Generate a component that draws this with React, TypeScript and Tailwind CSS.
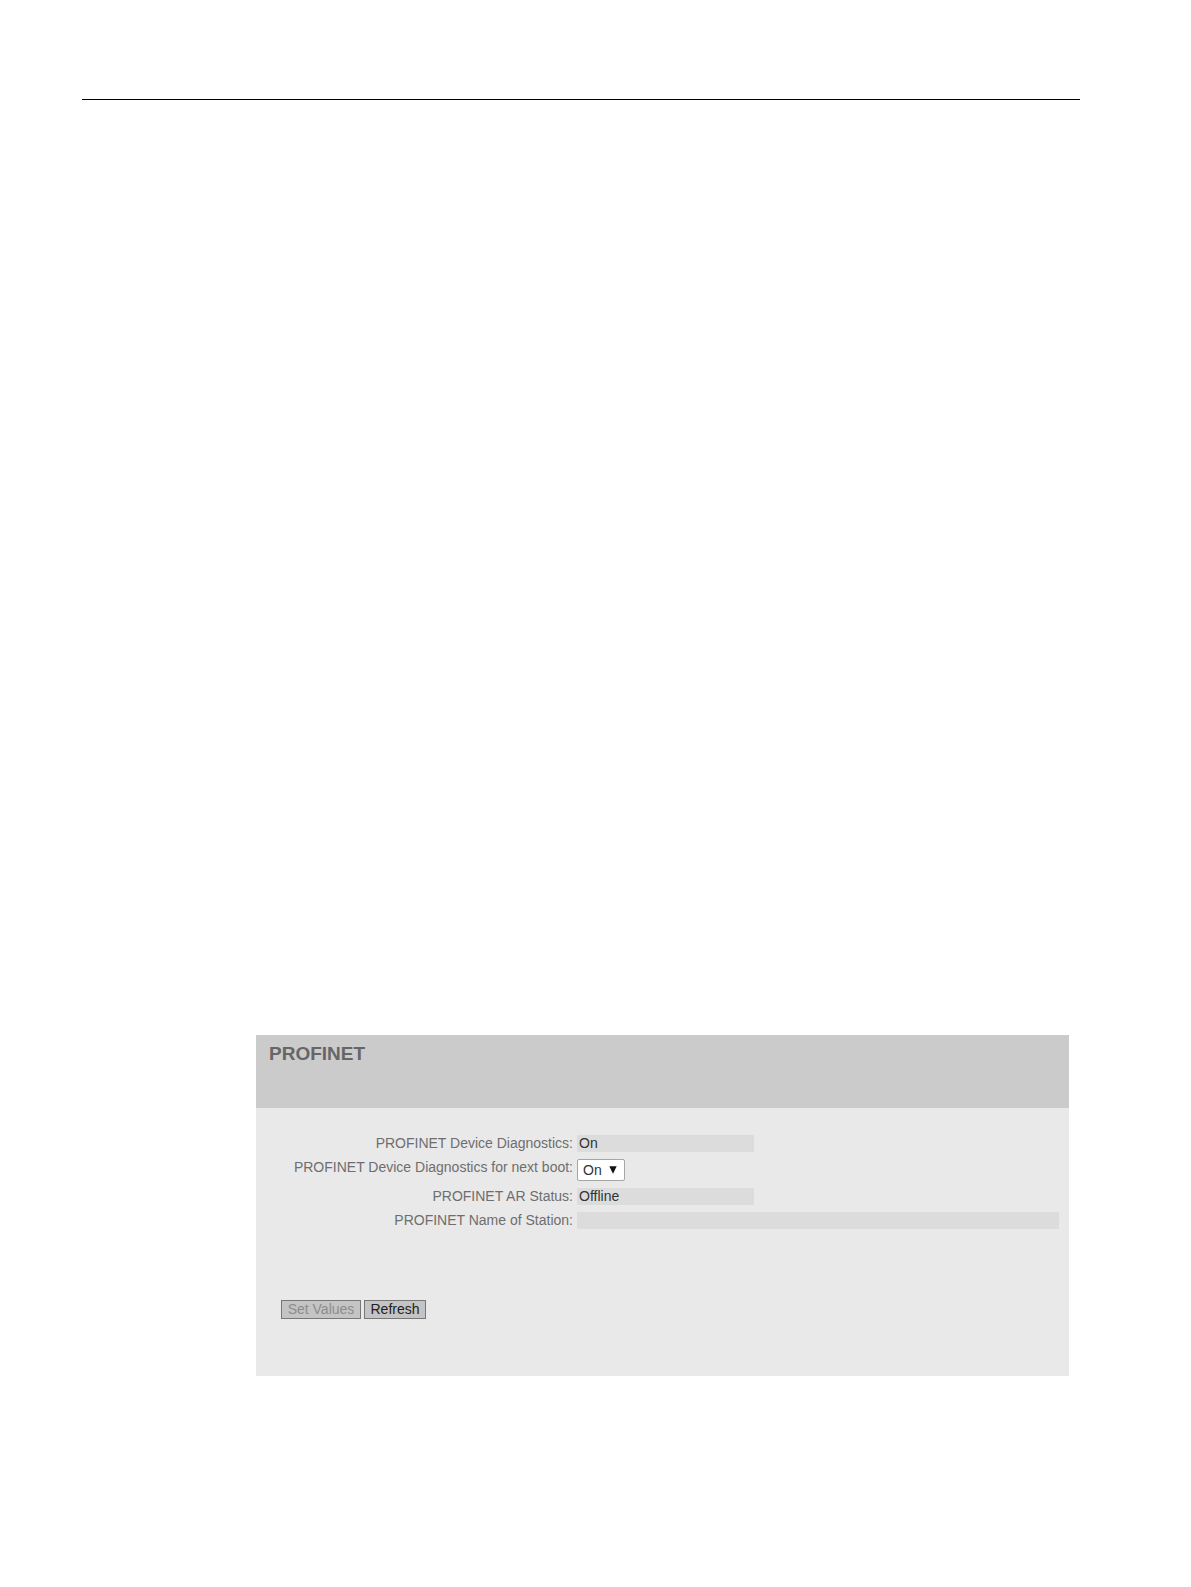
import { useState, type ReactNode } from "react";

interface RowProps {
  id: string;
  label: string;
  children: ReactNode;
}

function Row({ id, label, children }: RowProps) {
  return (
    <div className="grid grid-cols-[317px_1fr] items-start gap-1">
      <label htmlFor={id} className="text-right leading-[17px] text-[#6e6e6e]">
        {label}
      </label>
      {children}
    </div>
  );
}

interface ReadOnlyFieldProps {
  id: string;
  label: string;
  value: string;
  wide?: boolean;
}

function ReadOnlyField({ id, label, value, wide }: ReadOnlyFieldProps) {
  return (
    <Row id={id} label={label}>
      <input
        id={id}
        type="text"
        readOnly
        value={value}
        className={`h-[17px] bg-[#dcdcdc] px-0.5 leading-[17px] text-[#333333] outline-none ${
          wide ? "w-full" : "w-[177px]"
        }`}
      />
    </Row>
  );
}

export default function App() {
  const [nextBoot, setNextBoot] = useState("On");
  const changed = nextBoot !== "On";

  return (
    <div className="bg-white pb-[211px] pt-[99px] font-['Liberation_Sans',Arial,sans-serif] text-sm">
      <hr className="ml-[82px] mr-[111px] border-t border-black" />

      <main className="ml-64 mr-[122px] mt-[935px] bg-[#e9e9e9]">
        <header className="h-[73px] bg-[#cbcbcb] px-[13px] pt-2">
          <h1 className="text-[19px] font-bold leading-[22px] text-[#666666]">PROFINET</h1>
        </header>

        <form onSubmit={(e) => e.preventDefault()} className="pb-[57px] pt-[27px]">
          <div className="flex flex-col gap-[7px] pr-2.5">
            <ReadOnlyField id="diagnostics" label="PROFINET Device Diagnostics:" value="On" />
            <Row id="next-boot" label="PROFINET Device Diagnostics for next boot:">
              <div className="relative w-12">
                <select
                  id="next-boot"
                  value={nextBoot}
                  onChange={(e) => setNextBoot(e.target.value)}
                  className="block h-[22px] w-full appearance-none rounded-xs border border-[#a6a6a6] bg-white pl-[5px] text-[#333333]"
                >
                  <option>On</option>
                  <option>Off</option>
                </select>
                <svg
                  viewBox="0 0 8 8"
                  className="pointer-events-none absolute right-2 top-[7px] h-2 w-2"
                  aria-hidden="true"
                >
                  <path d="M0.3 0.3h7.4L4 7.8z" fill="#111111" />
                </svg>
              </div>
            </Row>
            <ReadOnlyField id="ar-status" label="PROFINET AR Status:" value="Offline" />
            <ReadOnlyField id="station-name" label="PROFINET Name of Station:" value="" wide />
          </div>

          <div className="mt-[71px] flex gap-[3px] pl-[25px]">
            <button
              type="submit"
              disabled={!changed}
              className="h-[19px] w-20 border border-[#777777] bg-[#c4c4c4] leading-[17px] text-[#222222] disabled:text-[#8c8c8c]"
            >
              Set Values
            </button>
            <button
              type="button"
              className="h-[19px] w-[62px] border border-[#777777] bg-[#c4c4c4] leading-[17px] text-[#222222]"
            >
              Refresh
            </button>
          </div>
        </form>
      </main>
    </div>
  );
}
